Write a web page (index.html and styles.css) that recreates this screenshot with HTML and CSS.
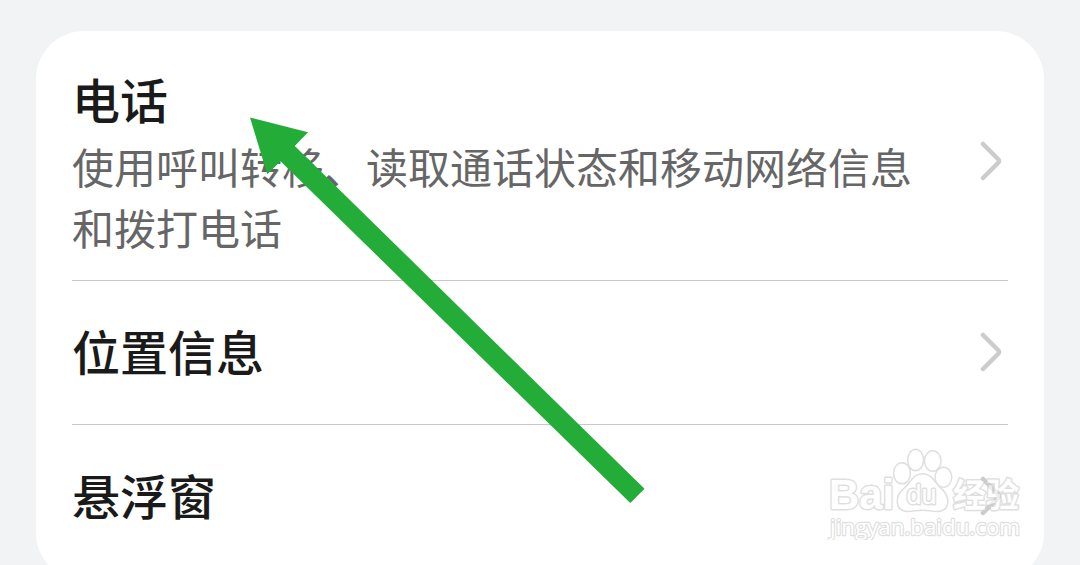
FILE: index.html
```html
<!DOCTYPE html>
<html lang="zh-CN">
<head>
  <meta charset="UTF-8">
  <meta name="viewport" content="width=device-width, initial-scale=1">
  <title>权限</title>
  <link rel="stylesheet" href="styles.css">
</head>
<body>
  <main class="card">
    <div class="row row-tall">
      <div class="text">
        <h2>电话</h2>
        <p>使用呼叫转移、读取通话状态和移动网络信息和拨打电话</p>
      </div>
      <svg class="chevron" viewBox="0 0 22 40"><path d="M3 3 L18 18 Q20 20 18 22 L3 37"/></svg>
    </div>
    <div class="row">
      <h2>位置信息</h2>
      <svg class="chevron" viewBox="0 0 22 40"><path d="M3 3 L18 18 Q20 20 18 22 L3 37"/></svg>
    </div>
    <div class="row">
      <h2>悬浮窗</h2>
      <svg class="chevron" viewBox="0 0 22 40"><path d="M3 3 L18 18 Q20 20 18 22 L3 37"/></svg>
    </div>
  </main>

  <!-- flecha -->
  <svg class="arrow" viewBox="0 0 1080 565">
    <polygon points="250,117.5 308,132.3 294.8,146 644.5,488.7 630.3,503 280.5,161.3 267.3,174.3"/>
  </svg>

  <svg class="watermark" viewBox="0 0 210 100">
    <g class="outline">
      <text class="brand" x="7" y="69" textLength="65" lengthAdjust="spacingAndGlyphs">Bai</text>
      <ellipse cx="80" cy="33.3" rx="7.7" ry="9.8"/>
      <ellipse cx="93.6" cy="20" rx="7.2" ry="10"/>
      <ellipse cx="110.7" cy="21" rx="7.5" ry="9.6"/>
      <ellipse cx="121.4" cy="37.3" rx="7.6" ry="9.3"/>
      <path class="pad" d="M100.500 34.500 C91 34.500 89.500 43 82.500 49 C74 55 73.500 69 83.500 70.500 C90 71.300 94 69.500 100.500 69.500 C107 69.500 111 71.300 117.500 70.500 C127.500 69 127 56 119.500 50 C111.500 43 110.500 34.500 100.500 34.500 Z"/>
      <text class="du" x="84.5" y="64" textLength="30" lengthAdjust="spacingAndGlyphs">du</text>
      <text class="cjk" x="131" y="67" textLength="66" lengthAdjust="spacingAndGlyphs">经验</text>
      <text class="url" x="8" y="95" textLength="190" lengthAdjust="spacingAndGlyphs">jingyan.baidu.com</text>
    </g>
  </svg>
</body>
</html>
```

FILE: styles.css
```css
* {
  margin: 0;
  padding: 0;
  box-sizing: border-box;
}

body {
  font-family: "Noto Sans CJK SC", sans-serif;
  background-color: #f1f3f5;
  height: 565px;
  padding: 31px 36px 0;
  overflow: hidden;
  position: relative;
}

.card {
  height: 550px;
  padding: 0 36px;
  background-color: #fff;
  border-radius: 48px;
}

.row {
  display: flex;
  align-items: center;
  justify-content: space-between;
  height: 144px;
  border-bottom: 1px solid #c9c9c9;
}

.row-tall {
  height: 250px;
}

.row:last-child {
  border-bottom: none;
}

.row h2 {
  padding-bottom: 6px;
}

.row-tall h2 {
  padding-bottom: 5px;
}

.row-tall .chevron {
  margin-top: 12px;
}

.text {
  width: 860px;
  padding-top: 12px;
}

h2 {
  font-size: 48px;
  font-weight: 500;
  line-height: 64px;
  color: #1a1a1a;
}

p {
  font-size: 42px;
  line-height: 61px;
  color: #666;
}

.chevron {
  width: 22px;
  height: 40px;
  margin-right: 6px;
  margin-bottom: 2px;
}

.chevron path {
  fill: none;
  stroke: #ccc;
  stroke-width: 4.5;
  stroke-linecap: round;
}

.arrow {
  position: absolute;
  left: 0;
  top: 0;
  width: 1080px;
  height: 565px;
  fill: #23ac38;
}

.watermark {
  position: absolute;
  left: 822px;
  top: 440px;
  width: 210px;
  height: 100px;
}

.outline {
  fill: #fff;
  stroke: #cfcfcf;
  stroke-width: 3;
  stroke-linejoin: round;
  paint-order: stroke;
  opacity: 0.65;
}

.outline ellipse,
.outline .pad {
  stroke-width: 3;
}

.brand {
  font: bold 43px "Liberation Sans", sans-serif;
}

.du {
  font: 27px "Liberation Sans", sans-serif;
}

.cjk {
  font: bold 33px "Noto Sans CJK SC", sans-serif;
}

.outline .url {
  font: 22px "Open Sans", sans-serif;
  stroke-width: 2.4;
}
```
